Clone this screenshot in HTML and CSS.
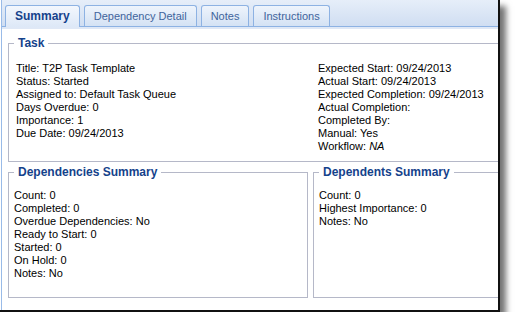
FILE: index.html
```html
<!DOCTYPE html>
<html lang="en">
<head>
  <meta charset="UTF-8">
  <meta name="viewport" content="width=device-width, initial-scale=1.0">
  <title>Task Summary</title>
  <link rel="stylesheet" href="styles.css">
</head>

<body>
  <!-- Window frame -->
  <div class="window">
    <div class="panel">
      <!-- Tabs -->
      <div class="tab-strip">
        <span class="tab active">Summary</span>
        <span class="tab">Dependency Detail</span>
        <span class="tab">Notes</span>
        <span class="tab">Instructions</span>
      </div>
      <div class="tab-spacer"></div>

      <!-- Summary tab body -->
      <div class="panel-body">
        <fieldset class="group task">
          <legend>Task</legend>
          <div class="task-cols">
            <div class="lines">
              <div>Title: T2P Task Template</div>
              <div>Status: Started</div>
              <div>Assigned to: Default Task Queue</div>
              <div>Days Overdue: 0</div>
              <div>Importance: 1</div>
              <div>Due Date: 09/24/2013</div>
            </div>
            <div class="lines">
              <div>Expected Start: 09/24/2013</div>
              <div>Actual Start: 09/24/2013</div>
              <div>Expected Completion: 09/24/2013</div>
              <div>Actual Completion:</div>
              <div>Completed By:</div>
              <div>Manual: Yes</div>
              <div>Workflow: <i>NA</i></div>
            </div>
          </div>
        </fieldset>

        <div class="summary-row">
          <fieldset class="group small">
            <legend>Dependencies Summary</legend>
            <div class="lines">
              <div>Count: 0</div>
              <div>Completed: 0</div>
              <div>Overdue Dependencies: No</div>
              <div>Ready to Start: 0</div>
              <div>Started: 0</div>
              <div>On Hold: 0</div>
              <div>Notes: No</div>
            </div>
          </fieldset>
          <fieldset class="group small">
            <legend>Dependents Summary</legend>
            <div class="lines">
              <div>Count: 0</div>
              <div>Highest Importance: 0</div>
              <div>Notes: No</div>
            </div>
          </fieldset>
        </div>
      </div>
    </div>
  </div>
</body>
</html>
```

FILE: styles.css
```css
/* Page */
body
{
  margin: 0;
  background: #fff;
  font-family: "Liberation Sans", Arial, sans-serif;
  font-size: 11px;
  color: #000;
}

/* Window frame with drop shadow */
.window
{
  width: 497px;
  height: 310px;
  padding-left: 1px;
  background: #fff;
  border-right: 2px solid #111;
  border-bottom: 2px solid #111;
  box-shadow: 6px 6px 6px rgba(0, 0, 0, 0.55);
  overflow: hidden;
}

.panel
{
  width: 620px;
  height: 100%;
  border-left: 1px solid #99bbe8;
}

/* Tabs */
.tab-strip
{
  display: flex;
  align-items: flex-end;
  gap: 4px;
  height: 21px;
  padding: 5px 0 0 3px;
  background: linear-gradient(#e6eef9, #d0def2);
  border-bottom: 1px solid #8db2e3;
}

.tab
{
  height: 20px;
  line-height: 20px;
  padding: 0 9px;
  border: 1px solid #8db2e3;
  border-bottom: none;
  border-radius: 3px 3px 0 0;
  background: linear-gradient(#eef4fc, #d4e2f4);
  color: #3f649c;
}

.tab.active
{
  height: 21px;
  margin-bottom: -1px;
  font-size: 12px;
  font-weight: bold;
  color: #15428b;
  background: linear-gradient(#f3f7fd, #dde8f7);
}

.tab-spacer
{
  height: 2px;
  background: #dfe8f6;
}

/* Body */
.panel-body
{
  padding: 7px 0 0 6px;
}

.group
{
  margin: 0;
  min-width: 0;
  border: 1px solid #b5b8c8;
  box-sizing: border-box;
}

.group legend
{
  padding: 0 4px;
  font-size: 12px;
  font-weight: bold;
  line-height: 14px;
  color: #15428b;
}

.lines
{
  line-height: 13px;
  white-space: nowrap;
}

.task
{
  padding: 12px 7px 8px 7px;
}

.task legend
{
  margin-left: -2px;
}

.task-cols
{
  display: grid;
  grid-template-columns: 302px auto;
}

.summary-row
{
  display: flex;
  gap: 5px;
  margin-top: 3px;
}

.small
{
  width: 300px;
  padding: 10px 5px 17px 5px;
}
```
